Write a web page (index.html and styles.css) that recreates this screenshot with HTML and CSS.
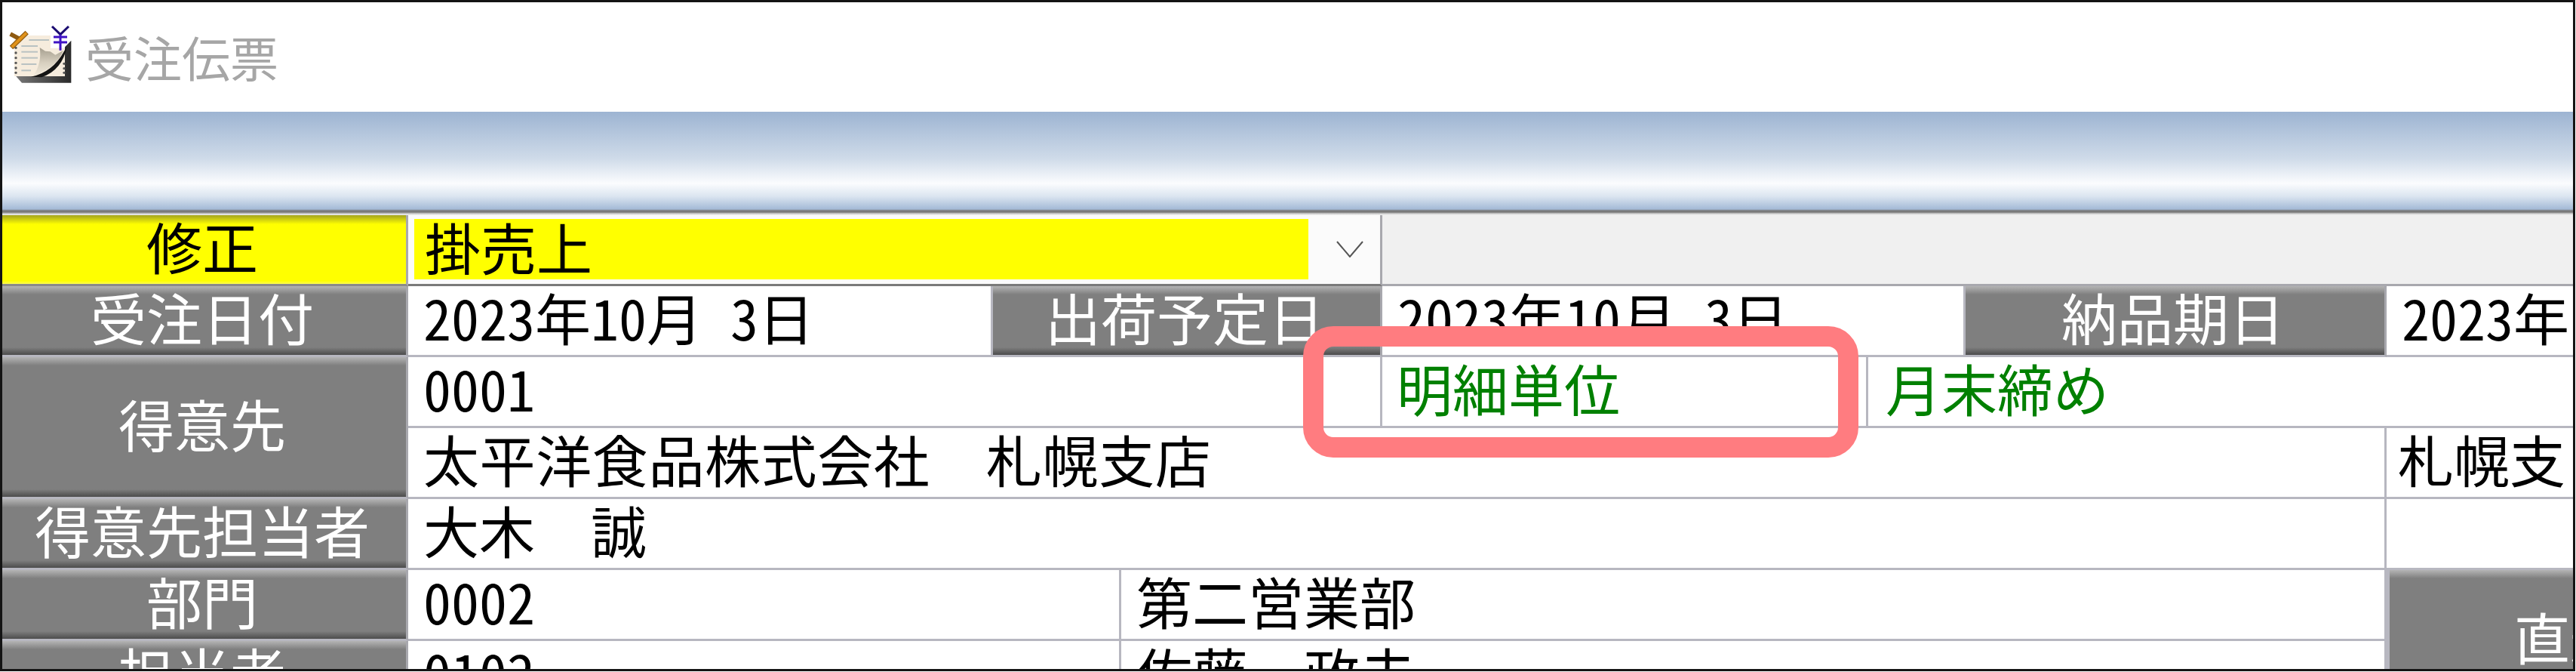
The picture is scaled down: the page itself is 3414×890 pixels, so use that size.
FILE: index.html
```html
<!DOCTYPE html>
<html lang="ja">
<head>
    <meta charset="UTF-8">
    <meta name="viewport" content="width=device-width, initial-scale=1.0">
    <title>受注伝票</title>
    <link rel="stylesheet" href="styles.css">
</head>
<body>
    <div class="window">
        <div class="title-bar">
            <svg class="title-icon" viewBox="0 0 300 270" width="100" height="90">
                <defs>
                    <linearGradient id="curl" x1="0" y1="0" x2="0" y2="1">
                        <stop offset="0" stop-color="#a59e8e"/>
                        <stop offset="0.55" stop-color="#d8d0c0"/>
                        <stop offset="1" stop-color="#efe8da"/>
                    </linearGradient>
                    <linearGradient id="edge" x1="0" y1="0" x2="1" y2="0">
                        <stop offset="0" stop-color="#777"/>
                        <stop offset="1" stop-color="#2a2a2a"/>
                    </linearGradient>
                </defs>
                <polygon points="46,225 72,254 268,254 268,86 243,112 243,225" fill="url(#edge)"/>
                <polygon points="42,84 68,66 186,66 186,116 243,116 243,228 42,228" fill="#f6ecdd"/>
                <g stroke="#b9c2c2" stroke-width="6">
                    <line x1="100" y1="84" x2="180" y2="84"/>
                    <line x1="70" y1="108" x2="135" y2="108"/>
                    <line x1="70" y1="131" x2="135" y2="131"/>
                    <line x1="70" y1="155" x2="135" y2="155"/>
                    <line x1="70" y1="180" x2="130" y2="180"/>
                    <line x1="70" y1="205" x2="108" y2="205"/>
                </g>
                <g fill="#555">
                    <circle cx="48" cy="115" r="5"/>
                    <circle cx="48" cy="135" r="5"/>
                    <circle cx="48" cy="155" r="5"/>
                    <circle cx="48" cy="175" r="5"/>
                    <circle cx="48" cy="195" r="5"/>
                    <circle cx="48" cy="214" r="5"/>
                    <circle cx="240" cy="178" r="5"/>
                    <circle cx="240" cy="197" r="5"/>
                    <circle cx="240" cy="214" r="5"/>
                </g>
                <path d="M143,114 L165,128 L185,130 L205,143 L236,126 Q210,195 118,226 Q152,175 143,114 Z" fill="url(#curl)"/>
                <path d="M108,230 Q195,212 240,128 L252,108 Q232,205 150,232 Z" fill="#141414"/>
                <path d="M26,60 L64,80" stroke="#8f5a10" stroke-width="17"/>
                <path d="M30,114 L92,54" stroke="#8f5a10" stroke-width="19"/>
                <path d="M32,112 L90,56" stroke="#e0921a" stroke-width="12"/>
                <g fill="none" stroke-width="9">
                    <path d="M192,30 L225,62 L258,30" stroke="#1a0a70"/>
                    <path d="M225,62 V125 M198,72 H252 M198,93 H252" stroke="#3f12c4"/>
                </g>
            </svg>
            <span class="title-text">受注伝票</span>
        </div>
        <div class="band"></div>

        <div class="form">
            <div class="label warn">修正</div>
            <div class="combo">
                <div class="combo-value">掛売上</div>
                <svg class="combo-arrow" viewBox="0 0 36 22" width="36" height="22">
                    <polyline points="1,1 18,21 35,1" fill="none" stroke="#555" stroke-width="2"/>
                </svg>
            </div>
            <div class="blank"></div>

            <div class="label">受注日付</div>
            <div class="cell num line">2023年10月 3日</div>
            <div class="label ship">出荷予定日</div>
            <div class="cell num ship-value line">2023年10月 3日</div>
            <div class="label">納品期日</div>
            <div class="cell num">2023年</div>

            <div class="label customer">得意先</div>
            <div class="cell num code line">0001</div>
            <div class="cell green unit line">明細単位</div>
            <div class="cell green close">月末締め</div>
            <div class="cell name company line">太平洋食品株式会社　札幌支店</div>
            <div class="cell branch">札幌支</div>

            <div class="label">得意先担当者</div>
            <div class="cell name line">大木　誠</div>
            <div class="cell"></div>

            <div class="label">部門</div>
            <div class="cell num dept line">0002</div>
            <div class="cell dept-name line">第二営業部</div>
            <div class="label direct">直送先</div>

            <div class="label">担当者</div>
            <div class="cell num dept line">0102</div>
            <div class="cell dept-name line">佐藤　政夫</div>
        </div>

        <div class="mark"></div>
    </div>
</body>
</html>
```
FILE: styles.css
```css
html, body {
    margin: 0;
    background: white;
}
body {
    font-family: "Noto Sans CJK JP", "Noto Sans", sans-serif;
    font-size: 74px;
    color: black;
}
.window {
    position: relative;
    box-sizing: border-box;
    width: 3413px;
    height: 889px;
    border: 3px solid #141414;
    overflow: hidden;
    background: white;
}

.title-bar {
    display: flex;
    align-items: center;
    height: 145px;
}
.title-icon {
    flex: none;
    margin: 0 0 11px 2px;
    filter: blur(0.6px);
}
.title-text {
    margin: 0 0 4px 8px;
    font-size: 64px;
    line-height: 1;
    color: #a6a6a6;
}

.band {
    height: 137px;
    background: linear-gradient(#9db4d2 0, #cfdbe9 62px, #fbfcfe 95px, #dbe5f0 112px, #a4bad7 129px, #7a7a7a 131px, #7a7a7a 133px, #cfcfcf 135px, #f4f4f4 137px);
}

.form {
    display: grid;
    grid-template-columns: 538px 775px 170px 346px 644px 129px 558px 564px;
    grid-auto-rows: 94px;
}
.label, .cell {
    box-sizing: border-box;
    display: flex;
    align-items: center;
    padding-bottom: 12px;
    white-space: pre;
    line-height: 1;
}
.label {
    justify-content: center;
    padding-right: 5px;
    border-bottom: 3px solid #b7b7c0;
    border-right: 3px solid #a8a8ae;
    color: white;
    background: linear-gradient(#b4b4b4 0, #7f7f7f 11px, #7f7f7f calc(100% - 10px), #4c4c4c 100%);
}
.label.warn {
    border-bottom: 3px solid #8a8a8a;
    color: black;
    background: linear-gradient(#a3a31e 0, #ffff00 12px, #ffff00 calc(100% - 4px), #ffff50 100%);
}
.cell {
    padding-left: 20px;
    border-bottom: 3px solid #b7b7c0;
}
.cell.num {
    font-feature-settings: "hwid";
}
.cell.line {
    border-right: 3px solid #b7b7c0;
}
.cell.green {
    padding-left: 23px;
    color: #008000;
}
.cell.unit {
    padding-left: 19px;
}
.cell.branch {
    padding-left: 15px;
}
.cell.company {
    letter-spacing: 0.6px;
}

.combo {
    grid-column: 2 / 5;
    box-sizing: border-box;
    display: flex;
    align-items: center;
    padding: 6px 0 8px 8px;
    border-bottom: 3px solid #7a7a7a;
    border-right: 3px solid #a8a8ae;
    background: #fbfbfb;
}
.combo-value {
    box-sizing: border-box;
    flex: none;
    width: 1185px;
    height: 80px;
    padding: 0 0 8px 14px;
    display: flex;
    align-items: center;
    line-height: 1;
    background: #ffff00;
}
.combo-arrow {
    flex: none;
    margin-left: 37px;
}
.blank {
    grid-column: 5 / 9;
    border-bottom: 3px solid #a8a8ae;
    background: #f0f0f0;
}

.ship {
    grid-column: 3 / 5;
}
.ship-value {
    grid-column: 5 / 7;
}
.customer {
    grid-row: span 2;
}
.code {
    grid-column: 2 / 5;
}
.close {
    grid-column: 6 / 9;
}
.name {
    grid-column: 2 / 8;
}
.dept {
    grid-column: 2 / 4;
}
.dept-name {
    grid-column: 4 / 8;
}
.direct {
    grid-row: span 2;
    border-left: 4px solid #b7b7c0;
}

.mark {
    position: absolute;
    left: 1724px;
    top: 429px;
    box-sizing: border-box;
    width: 736px;
    height: 174px;
    border: 27px solid #ff7c80;
    border-radius: 40px;
}
```
